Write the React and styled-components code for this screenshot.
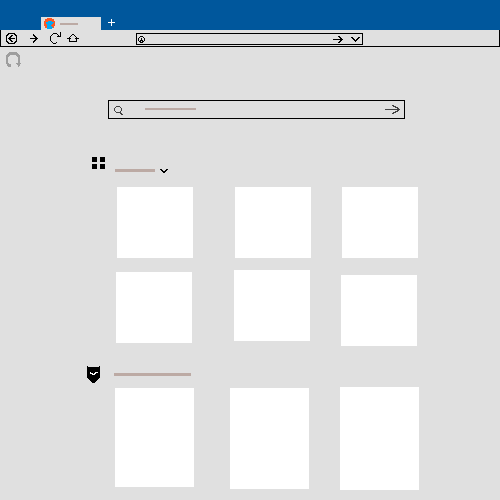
import React from "react";
import styled, { createGlobalStyle } from "styled-components";

const GlobalStyle = createGlobalStyle`
  * { box-sizing: border-box; }
  body { margin: 0; background: #e0e0e0; overflow: hidden; font-family: "Liberation Sans", sans-serif; }
`;

const Browser = styled.main`
  width: 500px;
  height: 500px;
  background: #e0e0e0;
  overflow: hidden;
  display: flex;
  flex-direction: column;
`;

const TabStrip = styled.header`
  height: 30px;
  flex: none;
  background: #00579c;
  display: flex;
  align-items: flex-end;
  padding-left: 41px;
`;

const Tab = styled.div`
  width: 60px;
  height: 13px;
  background: #e0e0e0;
  display: flex;
  align-items: flex-start;
  padding: 1px 0 0 3px;
`;

const TextBar = styled.span`
  display: block;
  flex: none;
  width: ${(p) => p.$width}px;
  height: ${(p) => p.$height}px;
  margin: ${(p) => p.$margin || "0"};
  background: #bcaaa4;
`;

const Glyph = styled.svg`
  display: block;
  flex: none;
  margin: ${(p) => p.$margin || "0"};
  shape-rendering: crispEdges;
`;

const Toolbar = styled.nav`
  height: 17px;
  flex: none;
  border: solid #000;
  border-width: 0 1px 1px 1px;
  display: flex;
  align-items: flex-start;
  padding-left: 5px;
`;

const AddressBar = styled.div`
  width: 227px;
  height: 12px;
  margin: 3px 0 0 57px;
  border: 1px solid #000;
  display: flex;
  align-items: flex-start;
`;

const Page = styled.section`
  height: 453px;
  display: flex;
  flex-direction: column;
  align-items: flex-start;
`;

const SearchBox = styled.div`
  width: 297px;
  height: 19px;
  margin: 33px 0 0 108px;
  border: 1px solid #000;
  display: flex;
  align-items: flex-start;
`;

const Heading = styled.div`
  display: flex;
  align-items: flex-start;
  height: ${(p) => p.$height}px;
  margin: ${(p) => p.$margin};
`;

const TileRow = styled.div`
  display: flex;
  align-items: flex-start;
  height: ${(p) => p.$height}px;
  margin: ${(p) => p.$margin};
`;

const Tile = styled.article`
  flex: none;
  width: ${(p) => p.$width || 76}px;
  height: ${(p) => p.$height || 71}px;
  margin: ${(p) => p.$margin || "0"};
  background: #fff;
`;

// One filled unit square for every "mark" character in the rows.
function pixelPath(rows, mark) {
  let d = "";
  rows.forEach((row, y) => {
    for (const run of row.matchAll(new RegExp(`${mark}+`, "g"))) {
      d += `M${run.index} ${y}h${run[0].length}v1h-${run[0].length}z`;
    }
  });
  return d;
}

// "#" is drawn in the main colour, "o" in the accent colour.
function PixelIcon({ rows, color = "#000", accent, ...rest }) {
  const w = rows[0].length;
  const h = rows.length;
  return (
    <Glyph width={w} height={h} viewBox={`0 0 ${w} ${h}`} aria-hidden="true" {...rest}>
      <path d={pixelPath(rows, "#")} fill={color} />
      {accent && <path d={pixelPath(rows, "o")} fill={accent} />}
    </Glyph>
  );
}

const FAVICON = [
  "...#####...",
  ".#########.",
  ".#########.",
  "####oooo###",
  "##oooooooo#",
  "##ooooooo##",
  "###ooooo###",
  "###oooo####",
  ".##ooooo##.",
  ".##oooooo#.",
  "...ooooo...",
];
const PLUS = [
  "...#...",
  "...#...",
  "...#...",
  "#######",
  "...#...",
  "...#...",
  "...#...",
];
const BACK = [
  "..#######..",
  ".##.....##.",
  "##...##..##",
  "#...##....#",
  "#..##.....#",
  "#.#######.#",
  "#..##.....#",
  "#...##....#",
  "##...##..##",
  ".##.....##.",
  "..#######..",
];
const FORWARD = [
  "...#....",
  "...##...",
  "....##..",
  ".....##.",
  "########",
  ".....##.",
  "....##..",
  "...##...",
  "...#....",
];
const RELOAD = [
  "..........#",
  "...####...#",
  "..#....#..#",
  ".#......#.#",
  "#......####",
  "#..........",
  "#..........",
  "#..........",
  "#..........",
  ".#.........",
  "..#...#....",
  "...###.....",
];
const HOME = [
  ".....##.....",
  "....#..#....",
  "...#....#...",
  "..#......#..",
  "####....####",
  "..#......#..",
  "..#......#..",
  "..########..",
];
const PROFILE = [
  "..###..",
  ".#...#.",
  "#..#..#",
  "#..#..#",
  "#.###.#",
  ".##.##.",
  "..###..",
];
const GO = [
  ".....##...",
  "......##..",
  ".......##.",
  "##########",
  ".......##.",
  "......##..",
  ".....##...",
];
const EXPAND = [
  "##.....##",
  ".##...##.",
  "..##.##..",
  "...###...",
  "....#....",
];
const CHEVRON = [
  "##....##",
  ".##..##.",
  "..####..",
  "...##...",
];
const HEADSET = [
  "...########....",
  "..##########...",
  ".############..",
  "####......####.",
  "###........###.",
  "##..........##.",
  "##..........##.",
  "##..........##.",
  "##..........##.",
  "##..........##.",
  "##..........##.",
  "###.......#####",
  ".####......###.",
  ".####.......##.",
  "..###.......#..",
];
const SEARCH = [
  "..####...",
  ".#....#..",
  "#......#.",
  "#......#.",
  "#......#.",
  ".#....#..",
  "..#####..",
  "......##.",
  ".......##",
];
const SUBMIT = [
  ".......##......",
  "........###....",
  "..........###..",
  "............##.",
  "###############",
  "............##.",
  "..........###..",
  "........###....",
  ".......##......",
];
const POCKET = [
  "#...........#",
  "#############",
  "#############",
  "#############",
  "#############",
  "#############",
  "###o####ooo##",
  "###ooo#oo####",
  "#####ooo#####",
  "#############",
  "#############",
  "#############",
  ".###########.",
  "..#########..",
  "...#######...",
  "....#####....",
  ".....###.....",
];
const APPS = [
  "#####...#####",
  "#####...#####",
  "#####...#####",
  "#####...#####",
  "#####...#####",
  ".............",
  ".............",
  "#####...#####",
  "#####...#####",
  "#####...#####",
  "#####...#####",
  "#####...#####",
];

export default function App() {
  return (
    <>
      <GlobalStyle />
      <Browser>
        <TabStrip>
          <Tab>
            <PixelIcon rows={FAVICON} color="#ff5722" accent="#03a9f4" />
            <TextBar $width={18} $height={2} $margin="5px 0 0 5px" />
          </Tab>
          <PixelIcon rows={PLUS} color="#fff" $margin="0 0 4px 7px" />
        </TabStrip>
        <Toolbar>
          <PixelIcon rows={BACK} $margin="3px 0 0 0" />
          <PixelIcon rows={FORWARD} $margin="4px 0 0 13px" />
          <PixelIcon rows={RELOAD} $margin="2px 0 0 12px" />
          <PixelIcon rows={HOME} $margin="4px 0 0 6px" />
          <AddressBar>
            <PixelIcon rows={PROFILE} $margin="2px 0 0 1px" />
            <PixelIcon rows={GO} $margin="2px 0 0 188px" />
            <PixelIcon rows={EXPAND} $margin="3px 0 0 8px" />
          </AddressBar>
        </Toolbar>
        <Page>
          <PixelIcon rows={HEADSET} color="#9e9e9e" $margin="5px 0 0 6px" />
          <SearchBox>
            <PixelIcon rows={SEARCH} color="#424242" $margin="5px 0 0 5px" />
            <TextBar $width={51} $height={2} $margin="7px 0 0 22px" />
            <PixelIcon rows={SUBMIT} color="#424242" $margin="4px 0 0 189px" />
          </SearchBox>
          <Heading $height={16} $margin="38px 0 0 92px">
            <PixelIcon rows={APPS} />
            <TextBar $width={40} $height={3} $margin="12px 0 0 10px" />
            <PixelIcon rows={CHEVRON} $margin="12px 0 0 5px" />
          </Heading>
          <TileRow $height={71} $margin="14px 0 0 117px">
            <Tile />
            <Tile $margin="0 0 0 42px" />
            <Tile $margin="0 0 0 31px" />
          </TileRow>
          <TileRow $height={76} $margin="12px 0 0 116px">
            <Tile $margin="2px 0 0" />
            <Tile $margin="0 0 0 42px" />
            <Tile $margin="5px 0 0 31px" />
          </TileRow>
          <Heading $height={17} $margin="20px 0 0 87px">
            <PixelIcon rows={POCKET} accent="#fff" />
            <TextBar $width={77} $height={3} $margin="7px 0 0 14px" />
          </Heading>
          <TileRow $height={103} $margin="4px 0 0 115px">
            <Tile $width={79} $height={99} $margin="1px 0 0" />
            <Tile $width={79} $height={101} $margin="1px 0 0 36px" />
            <Tile $width={79} $height={103} $margin="0 0 0 31px" />
          </TileRow>
        </Page>
      </Browser>
    </>
  );
}
